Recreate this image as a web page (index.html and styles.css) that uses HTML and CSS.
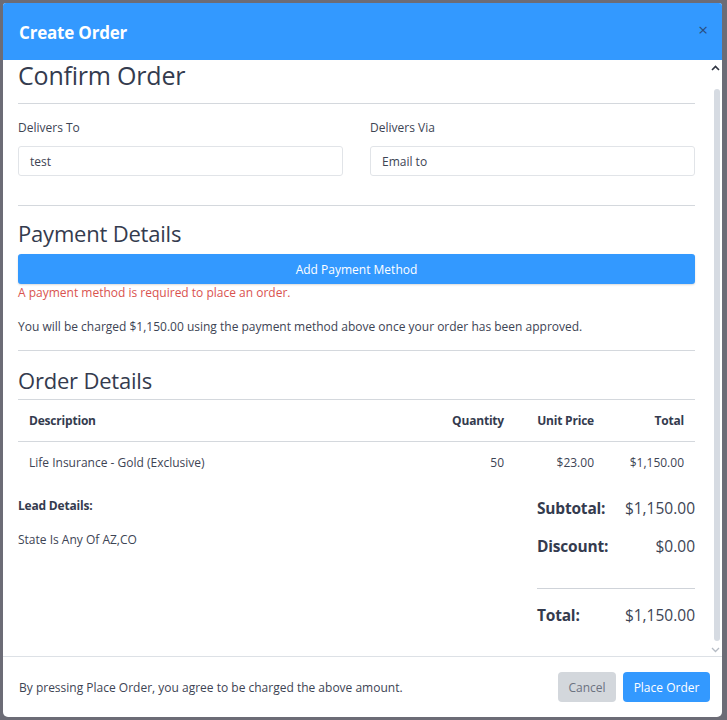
FILE: index.html
```html
<!DOCTYPE html>
<html>
<head>
<meta charset="utf-8">
<link rel="stylesheet" href="styles.css">
</head>
<body>
<div class="modal">
  <div class="modal-header">
    <span class="modal-title">Create Order</span>
    <span class="close">&times;</span>
  </div>
  <div class="modal-body">
    <div class="content">
      <h2 class="h-first">Confirm Order</h2>
      <hr class="hr-first">
      <div class="fields">
        <div class="field">
          <label>Delivers To</label>
          <div class="input">test</div>
        </div>
        <div class="field">
          <label>Delivers Via</label>
          <div class="input">Email to</div>
        </div>
      </div>
      <hr class="hr-sec">
      <h2 class="h-sec">Payment Details</h2>
      <button class="btn-add">Add Payment Method</button>
      <div class="error">A payment method is required to place an order.</div>
      <p class="charge">You will be charged $1,150.00 using the payment method above once your order has been approved.</p>
      <hr class="hr-sec2">
      <h2 class="h-sec h-order">Order Details</h2>
      <table class="items">
        <thead>
          <tr><th class="desc">Description</th><th class="num">Quantity</th><th class="num">Unit Price</th><th class="num">Total</th></tr>
        </thead>
        <tbody>
          <tr><td class="desc">Life Insurance - Gold (Exclusive)</td><td class="num">50</td><td class="num">$23.00</td><td class="num">$1,150.00</td></tr>
        </tbody>
      </table>
      <div class="bottom">
        <div class="lead">
          <div class="lead-title">Lead Details:</div>
          <div class="lead-text">State Is Any Of AZ,CO</div>
        </div>
        <div class="summary">
          <div class="sum-row"><span class="sum-label">Subtotal:</span><span>$1,150.00</span></div>
          <div class="sum-row sum-disc"><span class="sum-label">Discount:</span><span>$0.00</span></div>
          <div class="sum-line"></div>
          <div class="sum-row"><span class="sum-label">Total:</span><span>$1,150.00</span></div>
        </div>
      </div>
    </div>
    <div class="scrollbar">
      <svg class="arrow" width="9" height="6" viewBox="0 0 9 6"><path d="M1 5 L4.5 1.5 L8 5" fill="none" stroke="#2f3440" stroke-width="1.6"/></svg>
      <div class="thumb"></div>
      <svg class="arrow" width="9" height="6" viewBox="0 0 9 6"><path d="M1 1 L4.5 4.5 L8 1" fill="none" stroke="#b5bbc4" stroke-width="1.3"/></svg>
    </div>
  </div>
  <div class="modal-footer">
    <span class="agree">By pressing Place Order, you agree to be charged the above amount.</span>
    <div class="actions">
      <button class="btn-cancel">Cancel</button>
      <button class="btn-place">Place Order</button>
    </div>
  </div>
</div>
</body>
</html>
```

FILE: styles.css
```css
* { box-sizing: border-box; }
html, body { margin: 0; padding: 0; }
body {
  background: #6c6c76;
  font-family: "Open Sans", "Noto Sans", sans-serif;
  color: #3d4454;
  width: 727px;
  height: 720px;
  overflow: hidden;
  padding: 3px 5px 3px 3px;
}
.modal {
  width: 719px;
  height: 714px;
  background: #fff;
  border-radius: 3px 3px 5px 5px;
  display: flex;
  flex-direction: column;
  overflow: hidden;
}
.modal-header {
  height: 57px;
  background: #3399ff;
  display: flex;
  align-items: center;
  justify-content: space-between;
  padding: 2px 14px 0 16px;
  flex: none;
}
.modal-title {
  color: #fff;
  font-weight: 700;
  font-size: 17px;
  letter-spacing: -0.2px;
}
.close {
  color: #2a4d80;
  font-size: 17px;
  line-height: 1;
  margin-bottom: 6px;
}
.modal-body {
  height: 597px;
  flex: none;
  display: flex;
  border-bottom: 1px solid #dde1e6;
}
.content {
  flex: 1;
  padding: 0 14px 0 15px;
}
h2 {
  margin: 0;
  font-weight: 400;
  color: #343b4e;
  letter-spacing: -0.2px;
}
.h-first {
  font-size: 25px;
  line-height: 31px;
}
hr {
  border: 0;
  border-top: 1px solid #d4d8dd;
  margin: 0;
}
.hr-first { margin-top: 12px; }
.fields {
  display: flex;
  gap: 27px;
  margin-top: 14px;
}
.field { flex: 1; }
label {
  display: block;
  font-size: 12px;
  line-height: 20px;
  color: #3d4454;
}
.input {
  margin-top: 8px;
  height: 30px;
  border: 1px solid #e1e4e8;
  border-radius: 3px;
  font-size: 12px;
  line-height: 29px;
  padding: 0 11px;
  color: #3d4454;
}
.hr-sec { margin-top: 29px; }
.h-sec {
  font-size: 22px;
  line-height: 30px;
  margin-top: 12px;
}
.btn-add {
  display: block;
  width: 100%;
  height: 30px;
  margin-top: 6px;
  border: 0;
  border-radius: 3px;
  background: #3399ff;
  color: #fff;
  font-family: inherit;
  font-size: 12px;
  box-shadow: 0 1px 2px rgba(0,0,0,0.15);
}
.error {
  color: #d9534f;
  font-size: 12px;
  line-height: 18px;
}
.charge {
  margin: 14px 0 0;
  font-size: 12px;
  line-height: 21px;
}
.hr-sec2 { margin-top: 13px; }
.h-sec.h-order { margin-top: 14px; }
.items {
  width: 100%;
  border-collapse: collapse;
  margin-top: 4px;
  font-size: 12px;
}
.items th, .items td {
  padding: 0 11px;
  height: 42px;
}
.items thead tr { border-top: 1px solid #d4d8dd; border-bottom: 1px solid #d4d8dd; }
.items th { font-weight: 700; color: #343b4e; letter-spacing: -0.2px; }
.items .desc { text-align: left; }
.items .num { text-align: right; white-space: nowrap; }
.items th.num:nth-child(2), .items td.num:nth-child(2) { width: 100px; }
.items th.num:nth-child(3), .items td.num:nth-child(3) { width: 90px; }
.items th.num:nth-child(4), .items td.num:nth-child(4) { width: 90px; }
.bottom {
  display: flex;
  justify-content: space-between;
}
.lead-title {
  margin-top: 12px;
  font-size: 12px;
  font-weight: 700;
  line-height: 20px;
  color: #343b4e;
  letter-spacing: -0.2px;
}
.lead-text {
  margin-top: 14px;
  font-size: 12px;
  line-height: 20px;
}
.summary {
  width: 158px;
  margin-top: 12px;
}
.sum-row {
  display: flex;
  justify-content: space-between;
  font-size: 15.5px;
  line-height: 24px;
}
.sum-label { font-weight: 700; color: #343b4e; letter-spacing: -0.2px; }
.sum-disc { margin-top: 14px; }
.sum-line {
  border-top: 1px solid #cfd3d9;
  margin: 30px 0 14px;
}
.scrollbar {
  width: 13px;
  flex: none;
  display: flex;
  flex-direction: column;
  align-items: center;
  padding: 5px 0 3px;
}
.arrow { display: block; flex: none; }
.thumb {
  width: 6px;
  flex: 1;
  background: #d6dbe2;
  border-radius: 3px;
  margin: 18px 0 6px 2px;
}
.modal-footer {
  flex: 1;
  display: flex;
  align-items: center;
  justify-content: space-between;
  padding: 0 12px 0 16px;
}
.agree { font-size: 12px; }
.actions { display: flex; gap: 7px; }
.actions button {
  height: 30px;
  border: 0;
  border-radius: 4px;
  font-family: inherit;
  font-size: 12px;
  padding: 0;
  white-space: nowrap;
}
.btn-cancel { background: #d3d7dc; color: #6b7280; width: 58px; }
.btn-place { background: #3399ff; color: #fff; width: 87px; }
```
